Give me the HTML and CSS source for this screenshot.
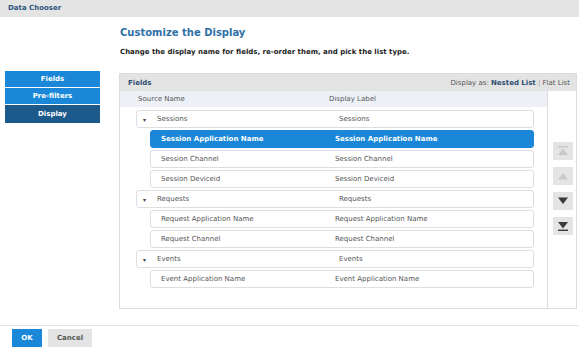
FILE: index.html
```html
<!DOCTYPE html>
<html lang="en">
<head>
<meta charset="UTF-8">
<meta name="viewport" content="width=device-width, initial-scale=1.0">
<title>Data Chooser</title>
<link rel="stylesheet" href="styles.css">
</head>
<body>

<div class="titlebar">Data Chooser</div>

<div class="main">
    <div class="nav">
        <div class="nav-item">Fields</div>
        <div class="nav-item">Pre-filters</div>
        <div class="nav-item active">Display</div>
    </div>

    <div class="content">
        <h1>Customize the Display</h1>
        <p class="intro">Change the display name for fields, re-order them, and pick the list type.</p>

        <div class="panel">
            <div class="panel-head">
                <span class="panel-title">Fields</span>
                <span class="display-as">Display as: <b>Nested List</b> <span class="sep">|</span> Flat List</span>
            </div>
            <div class="panel-body">
                <div class="list">
                    <div class="list-head">
                        <span class="col-source">Source Name</span>
                        <span>Display Label</span>
                    </div>
                    <div class="row group"><span class="caret">&#9662;</span><span class="name">Sessions</span><span>Sessions</span></div>
                    <div class="row child selected"><span class="name">Session Application Name</span><span>Session Application Name</span></div>
                    <div class="row child"><span class="name">Session Channel</span><span>Session Channel</span></div>
                    <div class="row child"><span class="name">Session Deviceid</span><span>Session Deviceid</span></div>
                    <div class="row group"><span class="caret">&#9662;</span><span class="name">Requests</span><span>Requests</span></div>
                    <div class="row child"><span class="name">Request Application Name</span><span>Request Application Name</span></div>
                    <div class="row child"><span class="name">Request Channel</span><span>Request Channel</span></div>
                    <div class="row group"><span class="caret">&#9662;</span><span class="name">Events</span><span>Events</span></div>
                    <div class="row child"><span class="name">Event Application Name</span><span>Event Application Name</span></div>
                </div>
                <div class="side">
                    <div class="move disabled">
                        <svg width="10" height="10" viewBox="0 0 10 10"><rect x="0" y="0" width="10" height="1.4"/><polygon points="5,2.5 10,9 0,9"/></svg>
                    </div>
                    <div class="move disabled">
                        <svg width="10" height="10" viewBox="0 0 10 10"><polygon points="5,2 10,8.5 0,8.5"/></svg>
                    </div>
                    <div class="move">
                        <svg width="10" height="10" viewBox="0 0 10 10"><polygon points="0,1.5 10,1.5 5,8"/></svg>
                    </div>
                    <div class="move">
                        <svg width="10" height="10" viewBox="0 0 10 10"><polygon points="0,1 10,1 5,7.5"/><rect x="0" y="8.6" width="10" height="1.4"/></svg>
                    </div>
                </div>
            </div>
        </div>
    </div>
</div>

<div class="footer">
    <button class="btn ok">OK</button>
    <button class="btn cancel">Cancel</button>
</div>

</body>
</html>
```

FILE: styles.css
```css
body {
    margin: 0;
    padding: 0;
    font-family: "DejaVu Sans", Verdana, sans-serif;
    font-size: 7px;
    color: #555;
    background-color: #fff;
}
.titlebar {
    height: 17px;
    line-height: 17px;
    padding-left: 8px;
    background-color: #e4e4e4;
    color: #2d5680;
    font-weight: bold;
}
.main {
    display: flex;
}
.nav {
    width: 95px;
    margin: 54px 0 0 5px;
}
.nav-item {
    height: 16px;
    line-height: 16px;
    margin-bottom: 1px;
    text-align: center;
    color: #fff;
    font-weight: bold;
    background-color: #1a87d8;
}
.nav-item.active {
    height: 18px;
    line-height: 18px;
    background-color: #1d5a8c;
}
.content {
    margin-left: 19px;
    width: 458px;
}
h1 {
    margin: 10px 0 0 1px;
    font-size: 10px;
    line-height: 12px;
    color: #2f6fa8;
}
.intro {
    margin: 8px 0 0 1px;
    line-height: 10px;
    font-weight: bold;
    color: #222;
}
.panel {
    margin-top: 16px;
    border: 1px solid #dcdcdc;
}
.panel-head {
    display: flex;
    justify-content: space-between;
    align-items: center;
    height: 17px;
    padding: 0 6px 0 8px;
    background-color: #e3e3e3;
}
.panel-title {
    font-weight: bold;
    color: #2b4e72;
}
.display-as b {
    color: #2b4e72;
}
.sep {
    color: #aaa;
}
.panel-body {
    display: flex;
    height: 217px;
}
.list {
    flex: 1;
}
.list-head {
    display: flex;
    height: 16px;
    line-height: 16px;
    padding-left: 18px;
    margin-bottom: 3px;
    background-color: #edf1f7;
}
.col-source {
    width: 191px;
}
.row {
    display: flex;
    align-items: center;
    height: 16px;
    margin: 0 13px 2px 16px;
    border: 1px solid #dedede;
    border-radius: 3px;
}
.row.child {
    margin-left: 30px;
    padding-left: 10px;
}
.row.child .name {
    width: 174px;
}
.row.group {
    padding-left: 6px;
}
.row.group .caret {
    width: 14px;
    font-size: 6px;
    color: #444;
}
.row.group .name {
    width: 182px;
}
.row.selected {
    background-color: #1a87d8;
    border-color: #1a87d8;
    color: #fff;
    font-weight: bold;
}
.side {
    width: 28px;
    border-left: 1px solid #dcdcdc;
    padding-top: 51px;
}
.move {
    display: flex;
    align-items: center;
    justify-content: center;
    width: 20px;
    height: 18px;
    margin: 0 0 7px 5px;
    background-color: #e4e4e4;
}
.move svg {
    fill: #3a3a3a;
}
.move.disabled svg {
    fill: #c9c9c9;
}
.footer {
    margin-top: 16px;
    padding: 3px 12px 0;
    border-top: 1px solid #e2e2e2;
    display: flex;
    gap: 6px;
}
.btn {
    height: 18px;
    border: 0;
    padding: 0;
    font-family: inherit;
    font-size: 7px;
    font-weight: bold;
}
.btn.ok {
    width: 30px;
    background-color: #1a87d8;
    color: #fff;
}
.btn.cancel {
    width: 44px;
    background-color: #e4e4e4;
    color: #555;
}
```
